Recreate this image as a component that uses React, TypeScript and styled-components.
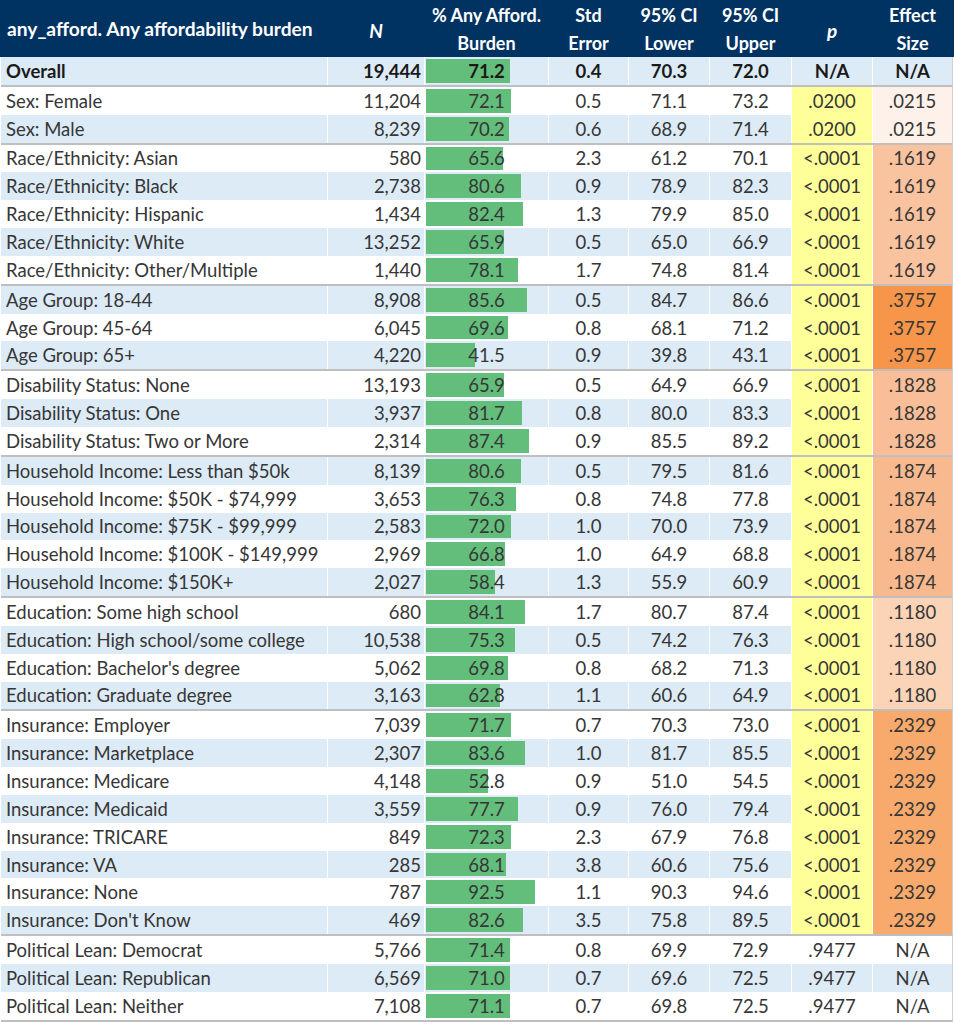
import React from 'react';
import styled, { createGlobalStyle } from 'styled-components';

const GlobalStyle = createGlobalStyle`
  body {
    margin: 0;
    background: #ffffff;
    font-family: Lato, "Open Sans", sans-serif;
  }
`;

const COLS = '326px 96px 123px 79px 80px 81px 80px 79px';

const Table = styled.div`
  width: 952px;
  padding-left: 1px;
  background: #ffffff;
`;

const HeaderRow = styled.div`
  display: grid;
  grid-template-columns: ${COLS};
  column-gap: 1px;
  height: 57px;
  background: #003262;
  margin-left: -1px;
  padding-left: 1px;
  width: 953px;
`;

const HeadCell = styled.div<{ $left?: boolean; $italic?: boolean }>`
  display: flex;
  align-items: center;
  justify-content: ${(p) => (p.$left ? 'flex-start' : 'center')};
  padding-left: ${(p) => (p.$left ? '6px' : '0')};
  padding-top: ${(p) => (p.$italic ? '4px' : '1px')};
  text-align: center;
  color: #ffffff;
  font-weight: 700;
  font-size: ${(p) => (p.$italic ? '19px' : p.$left ? '19.2px' : '18px')};
  font-style: ${(p) => (p.$italic ? 'italic' : 'normal')};
  line-height: 28px;
  white-space: nowrap;
`;

const Group = styled.div`
  border-bottom: 2px solid #bfbfbf;
  border-right: 1px solid #d0d0d0;
`;

const Row = styled.div`
  display: grid;
  grid-template-columns: ${COLS};
  column-gap: 1px;
  height: 27.85px;
  background: #ffffff;
`;

const Cell = styled.div<{ $bg: string; $align?: 'left' | 'right' | 'center'; $bold?: boolean }>`
  display: flex;
  align-items: center;
  justify-content: ${(p) =>
    p.$align === 'left' ? 'flex-start' : p.$align === 'right' ? 'flex-end' : 'center'};
  padding: ${(p) => (p.$align === 'left' ? '0 0 0 5px' : p.$align === 'right' ? '0 3px 0 0' : '0')};
  background: ${(p) => p.$bg};
  color: ${(p) => (p.$bold ? '#1a1a1a' : '#363636')};
  font-size: 18.5px;
  font-weight: ${(p) => (p.$bold ? 700 : 400)};
  white-space: nowrap;
  overflow: hidden;
`;

const BarCell = styled.div<{ $bg: string; $bold?: boolean }>`
  position: relative;
  display: flex;
  align-items: center;
  justify-content: center;
  background: ${(p) => p.$bg};
  color: ${(p) => (p.$bold ? '#1a1a1a' : '#363636')};
  font-size: 18.5px;
  font-weight: ${(p) => (p.$bold ? 700 : 400)};
`;

const Bar = styled.div`
  position: absolute;
  left: 1px;
  top: 2px;
  bottom: 2px;
  background: #63be7b;
`;

const BarText = styled.span`
  position: relative;
`;

const BLUE = '#ddebf7';
const YELLOW = '#ffff99';

const effectColors: Record<string, string> = {
  '.0215': '#fdf1ea',
  '.1180': '#fbd4b8',
  '.1619': '#f9c3a0',
  '.1828': '#f9be97',
  '.1874': '#f8b98e',
  '.2329': '#f8aa6d',
  '.3757': '#f7964a',
};

type RowData = [string, string, number, string, string, string, string, string];

const groups: RowData[][] = [
  [['Overall', '19,444', 71.2, '0.4', '70.3', '72.0', 'N/A', 'N/A']],
  [
    ['Sex: Female', '11,204', 72.1, '0.5', '71.1', '73.2', '.0200', '.0215'],
    ['Sex: Male', '8,239', 70.2, '0.6', '68.9', '71.4', '.0200', '.0215'],
  ],
  [
    ['Race/Ethnicity: Asian', '580', 65.6, '2.3', '61.2', '70.1', '<.0001', '.1619'],
    ['Race/Ethnicity: Black', '2,738', 80.6, '0.9', '78.9', '82.3', '<.0001', '.1619'],
    ['Race/Ethnicity: Hispanic', '1,434', 82.4, '1.3', '79.9', '85.0', '<.0001', '.1619'],
    ['Race/Ethnicity: White', '13,252', 65.9, '0.5', '65.0', '66.9', '<.0001', '.1619'],
    ['Race/Ethnicity: Other/Multiple', '1,440', 78.1, '1.7', '74.8', '81.4', '<.0001', '.1619'],
  ],
  [
    ['Age Group: 18-44', '8,908', 85.6, '0.5', '84.7', '86.6', '<.0001', '.3757'],
    ['Age Group: 45-64', '6,045', 69.6, '0.8', '68.1', '71.2', '<.0001', '.3757'],
    ['Age Group: 65+', '4,220', 41.5, '0.9', '39.8', '43.1', '<.0001', '.3757'],
  ],
  [
    ['Disability Status: None', '13,193', 65.9, '0.5', '64.9', '66.9', '<.0001', '.1828'],
    ['Disability Status: One', '3,937', 81.7, '0.8', '80.0', '83.3', '<.0001', '.1828'],
    ['Disability Status: Two or More', '2,314', 87.4, '0.9', '85.5', '89.2', '<.0001', '.1828'],
  ],
  [
    ['Household Income: Less than $50k', '8,139', 80.6, '0.5', '79.5', '81.6', '<.0001', '.1874'],
    ['Household Income: $50K - $74,999', '3,653', 76.3, '0.8', '74.8', '77.8', '<.0001', '.1874'],
    ['Household Income: $75K - $99,999', '2,583', 72.0, '1.0', '70.0', '73.9', '<.0001', '.1874'],
    ['Household Income: $100K - $149,999', '2,969', 66.8, '1.0', '64.9', '68.8', '<.0001', '.1874'],
    ['Household Income: $150K+', '2,027', 58.4, '1.3', '55.9', '60.9', '<.0001', '.1874'],
  ],
  [
    ['Education: Some high school', '680', 84.1, '1.7', '80.7', '87.4', '<.0001', '.1180'],
    ['Education: High school/some college', '10,538', 75.3, '0.5', '74.2', '76.3', '<.0001', '.1180'],
    ["Education: Bachelor's degree", '5,062', 69.8, '0.8', '68.2', '71.3', '<.0001', '.1180'],
    ['Education: Graduate degree', '3,163', 62.8, '1.1', '60.6', '64.9', '<.0001', '.1180'],
  ],
  [
    ['Insurance: Employer', '7,039', 71.7, '0.7', '70.3', '73.0', '<.0001', '.2329'],
    ['Insurance: Marketplace', '2,307', 83.6, '1.0', '81.7', '85.5', '<.0001', '.2329'],
    ['Insurance: Medicare', '4,148', 52.8, '0.9', '51.0', '54.5', '<.0001', '.2329'],
    ['Insurance: Medicaid', '3,559', 77.7, '0.9', '76.0', '79.4', '<.0001', '.2329'],
    ['Insurance: TRICARE', '849', 72.3, '2.3', '67.9', '76.8', '<.0001', '.2329'],
    ['Insurance: VA', '285', 68.1, '3.8', '60.6', '75.6', '<.0001', '.2329'],
    ['Insurance: None', '787', 92.5, '1.1', '90.3', '94.6', '<.0001', '.2329'],
    ["Insurance: Don't Know", '469', 82.6, '3.5', '75.8', '89.5', '<.0001', '.2329'],
  ],
  [
    ['Political Lean: Democrat', '5,766', 71.4, '0.8', '69.9', '72.9', '.9477', 'N/A'],
    ['Political Lean: Republican', '6,569', 71.0, '0.7', '69.6', '72.5', '.9477', 'N/A'],
    ['Political Lean: Neither', '7,108', 71.1, '0.7', '69.8', '72.5', '.9477', 'N/A'],
  ],
];

const BAR_SCALE = 1.18;

export default function App() {
  let index = 0;
  return (
    <>
      <GlobalStyle />
      <Table>
        <HeaderRow>
          <HeadCell $left>any_afford. Any affordability burden</HeadCell>
          <HeadCell $italic>N</HeadCell>
          <HeadCell>% Any Afford.<br />Burden</HeadCell>
          <HeadCell>Std<br />Error</HeadCell>
          <HeadCell>95% CI<br />Lower</HeadCell>
          <HeadCell>95% CI<br />Upper</HeadCell>
          <HeadCell $italic>p</HeadCell>
          <HeadCell>Effect<br />Size</HeadCell>
        </HeaderRow>
        {groups.map((rows, gi) => (
          <Group key={gi}>
            {rows.map((r) => {
              const bg = index % 2 === 0 ? BLUE : '#ffffff';
              const bold = index === 0;
              index += 1;
              const [label, n, pct, se, lo, hi, p, eff] = r;
              const pBg = p.startsWith('<') || p === '.0200' ? YELLOW : bg;
              const effBg = effectColors[eff] ?? bg;
              return (
                <Row key={label}>
                  <Cell $bg={bg} $align="left" $bold={bold}>{label}</Cell>
                  <Cell $bg={bg} $align="right" $bold={bold}>{n}</Cell>
                  <BarCell $bg={bg} $bold={bold}>
                    <Bar style={{ width: `${pct * BAR_SCALE}px` }} />
                    <BarText>{pct.toFixed(1)}</BarText>
                  </BarCell>
                  <Cell $bg={bg} $bold={bold}>{se}</Cell>
                  <Cell $bg={bg} $bold={bold}>{lo}</Cell>
                  <Cell $bg={bg} $bold={bold}>{hi}</Cell>
                  <Cell $bg={pBg} $bold={bold}>{p}</Cell>
                  <Cell $bg={effBg} $bold={bold}>{eff}</Cell>
                </Row>
              );
            })}
          </Group>
        ))}
      </Table>
    </>
  );
}
